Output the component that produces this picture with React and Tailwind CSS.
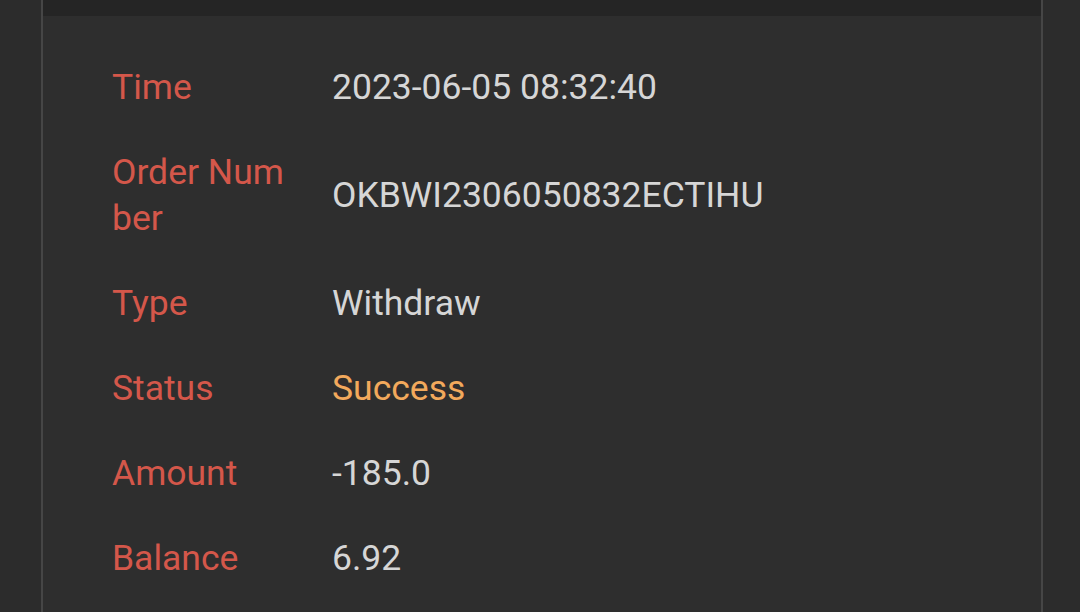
export default function App() {
  const rows = [
    { label: "Time", value: "2023-06-05 08:32:40" },
    { label: "Order Number", value: "OKBWI2306050832ECTIHU" },
    { label: "Type", value: "Withdraw" },
    { label: "Status", value: "Success", accent: true },
    { label: "Amount", value: "-185.0" },
    { label: "Balance", value: "6.92" },
  ];
  return (
    <div
      className="w-[1080px] h-[612px] overflow-hidden bg-[#2c2c2c] flex"
      style={{ fontFamily: "Roboto, 'Liberation Sans', sans-serif" }}
    >
      <div className="w-[41px] shrink-0" />
      <div className="w-[1002px] shrink-0 border-x-2 border-[#464646] bg-[#2e2e2e] flex flex-col">
        <div className="h-[16px] bg-[#252525] shrink-0" />
        <div className="pt-[28px] pl-[69px] flex flex-col">
          {rows.map((r) => (
            <div key={r.label} className="flex items-center py-[19.5px] text-[35.5px] leading-[46px]">
              <div className="w-[220px] pr-[38px] shrink-0 break-all text-[#d4574a]">{r.label}</div>
              <div className={r.accent ? "text-[#f2a95c]" : "text-[#d6d6d6]"}>{r.value}</div>
            </div>
          ))}
        </div>
      </div>
      <div className="flex-1" />
    </div>
  );
}
